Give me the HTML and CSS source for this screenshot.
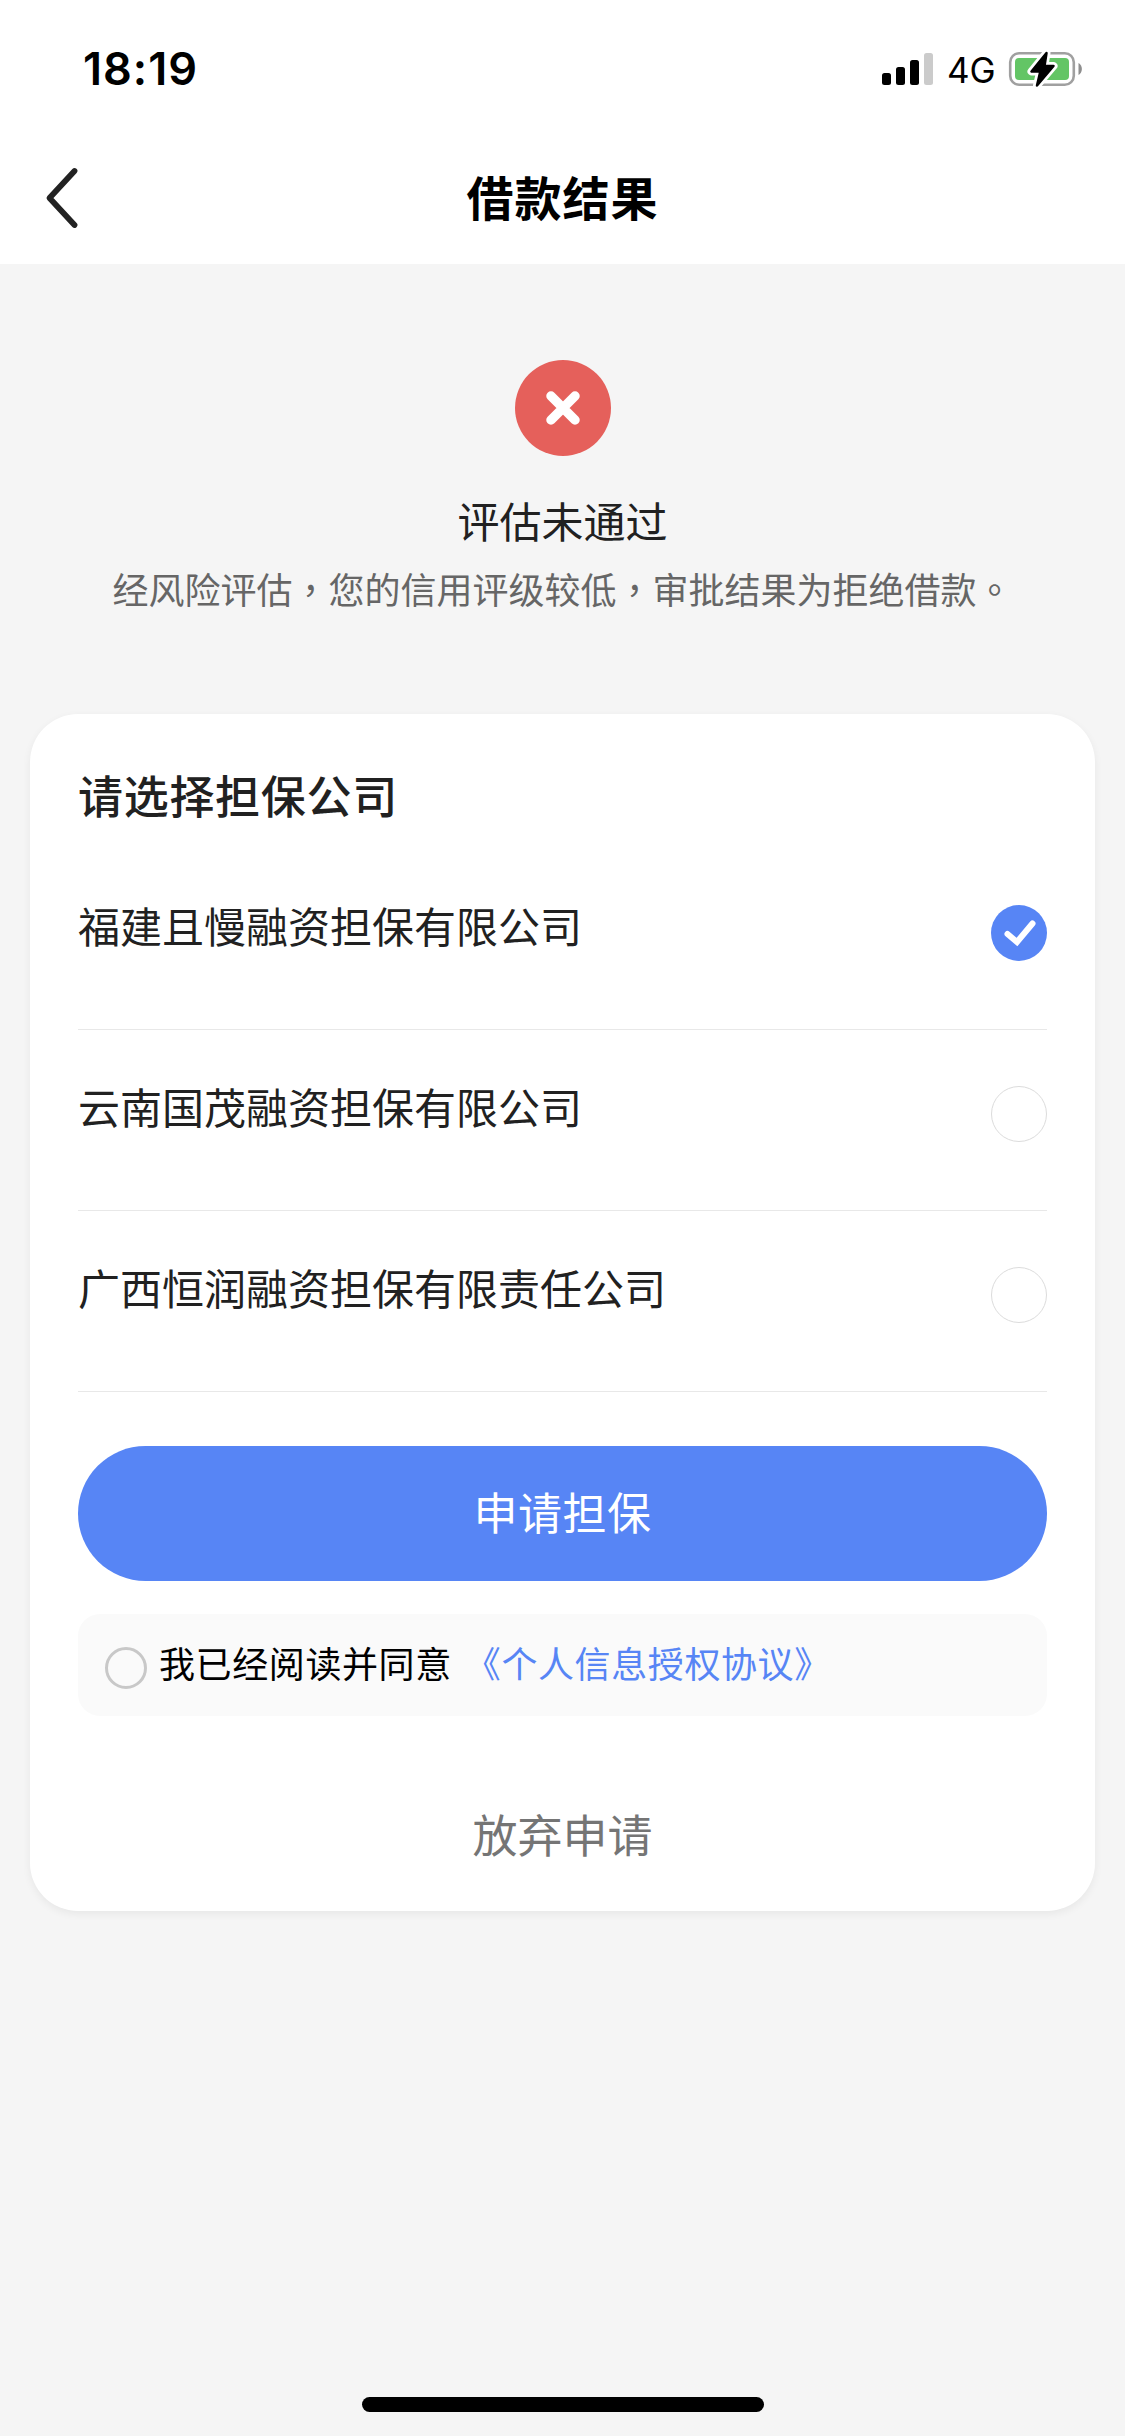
FILE: index.html
```html
<!DOCTYPE html>
<html lang="zh-CN">
<head>
    <meta charset="UTF-8">
    <meta name="viewport" content="width=device-width, initial-scale=1.0">
    <title>借款结果</title>
    <link rel="stylesheet" href="styles.css">
</head>
<body>
    <header class="header">
        <div class="status-bar">
            <span class="time">18:19</span>
            <div class="status-icons">
                <svg class="signal" viewBox="0 0 37 32">
                    <rect x="0" y="20" width="9" height="12" rx="2.5"/>
                    <rect x="14" y="14" width="9" height="18" rx="2.5"/>
                    <rect x="28" y="7" width="9" height="25" rx="2.5"/>
                    <rect class="signal-off" x="42" y="0" width="9" height="32" rx="2.5"/>
                </svg>
                <span class="network">4G</span>
                <svg class="battery" viewBox="0 0 74 36">
                    <rect x="1.2" y="2.2" width="63.6" height="31.6" rx="9" fill="none" stroke="#a0a0a0" stroke-width="2.6"/>
                    <rect x="6" y="7" width="54" height="22" rx="4" fill="#63c565"/>
                    <path d="M69.5 12a7 7 0 0 1 0 12z" fill="#8e8e8e"/>
                    <path class="bolt-gap" d="M37.500 2 22.500 20.500h8.800L28 34.500 44.500 15h-9z"/>
                    <path class="bolt" d="M37.500 2 22.500 20.500h8.800L28 34.500 44.500 15h-9z"/>
                </svg>
            </div>
        </div>
        <div class="nav-bar">
            <a class="back" href="#" aria-label="返回">
                <svg viewBox="0 0 32 62"><path d="M28.500 4 3.500 31l25 27"/></svg>
            </a>
            <h1>借款结果</h1>
        </div>
    </header>

    <section class="result">
        <svg class="result-icon" viewBox="0 0 96 96">
            <circle cx="48" cy="48" r="48"/>
            <path d="M36 36l24 24M60 36L36 60"/>
        </svg>
        <h2>评估未通过</h2>
        <p>经风险评估<span lang="zh-TW" class="punct">，</span>您的信用评级较低<span lang="zh-TW" class="punct">，</span>审批结果为拒绝借款<span lang="zh-TW" class="punct">。</span></p>
    </section>

    <main class="card">
        <h3>请选择担保公司</h3>
        <ul class="company-list">
            <li>
                <span>福建且慢融资担保有限公司</span>
                <svg class="radio checked" viewBox="0 0 56 56">
                    <circle cx="28" cy="28" r="28"/>
                    <path d="M16.500 29l9.500 8L41.500 18.500"/>
                </svg>
            </li>
            <li>
                <span>云南国茂融资担保有限公司</span>
                <i class="radio"></i>
            </li>
            <li>
                <span>广西恒润融资担保有限责任公司</span>
                <i class="radio"></i>
            </li>
        </ul>
        <button class="btn">申请担保</button>
        <div class="agreement">
            <i class="agree-check"></i>
            <span class="agree-text">我已经阅读并同意</span>
            <a href="#">《个人信息授权协议》</a>
        </div>
        <button class="btn-text">放弃申请</button>
    </main>

    <div class="home-indicator"></div>
</body>
</html>
```

FILE: styles.css
```css
* {
    margin: 0;
    padding: 0;
    box-sizing: border-box;
}

body {
    font-family: 'Noto Sans CJK SC', sans-serif;
    color: #212121;
    background-color: #f5f5f5;
    display: flex;
    flex-direction: column;
    height: 2436px;
}

h1, h2, h3 {
    font-weight: 500;
}

button {
    font-family: inherit;
    border: none;
    cursor: pointer;
}

svg {
    display: block;
    overflow: visible;
}

/* Header */
.header {
    height: 264px;
    background-color: #fff;
}

.status-bar {
    height: 132px;
    padding: 42px 42px 0 83px;
    display: flex;
    justify-content: space-between;
    align-items: flex-start;
    font-family: Inter, sans-serif;
    color: #000;
}

.time {
    font-size: 45px;
    font-weight: 600;
    line-height: 54px;
    letter-spacing: 1px;
}

.status-icons {
    display: flex;
    align-items: flex-start;
    padding-top: 9px;
}

.signal {
    width: 37px;
    height: 32px;
    margin: 2px 28px 0 0;
}

.signal-off {
    fill: #cbcbcb;
}

.network {
    font-size: 35px;
    line-height: 38px;
    width: 62px;
}

.battery {
    width: 74px;
    height: 36px;
}

.bolt-gap {
    fill: #fff;
    stroke: #fff;
    stroke-width: 8;
    stroke-linejoin: round;
}

.bolt {
    fill: #000;
    stroke: #000;
    stroke-width: 2.5;
    stroke-linejoin: round;
}

.nav-bar {
    height: 132px;
    padding: 0 46px;
    display: grid;
    grid-template-columns: 32px 1fr 32px;
    align-items: center;
}

.back svg {
    width: 32px;
    height: 62px;
    fill: none;
    stroke: #222;
    stroke-width: 5.8;
    stroke-linecap: round;
    stroke-linejoin: round;
}

h1 {
    padding-bottom: 5px;
    font-size: 47px;
    line-height: 127px;
    letter-spacing: 1px;
    font-weight: 700;
    text-align: center;
    color: #000;
}

/* Result */
.result {
    height: 450px;
    padding-top: 96px;
    display: flex;
    flex-direction: column;
    align-items: center;
}

.result-icon {
    width: 96px;
    height: 96px;
    fill: #e5605b;
}

.result-icon path {
    stroke: #fff;
    stroke-width: 9.5;
    stroke-linecap: round;
}

.result h2 {
    margin-top: 34px;
    font-size: 42px;
    line-height: 60px;
    font-weight: 400;
}

.result p {
    margin-top: 13px;
    font-size: 36px;
    line-height: 50px;
    color: #666;
}

.punct {
    font-family: 'Noto Sans CJK TC', sans-serif;
}

/* Guarantee card */
.card {
    height: 1197px;
    margin: 0 30px;
    padding: 47px 48px 0;
    display: flex;
    flex-direction: column;
    background-color: #fff;
    border-radius: 48px;
    box-shadow: 0 3px 9px rgba(0, 0, 0, 0.06);
}

.card h3 {
    font-size: 45px;
    line-height: 68px;
    letter-spacing: 0.7px;
}

.company-list {
    list-style: none;
    margin-top: 20px;
}

.company-list li {
    height: 181px;
    padding-top: 46px;
    display: flex;
    justify-content: space-between;
    align-items: flex-start;
    border-bottom: 1px solid #e8e8e8;
    font-size: 42px;
    line-height: 60px;
}

.radio {
    width: 56px;
    height: 56px;
    margin-top: 10px;
    border: 1px solid #dcdcdc;
    border-radius: 50%;
}

.radio.checked {
    border: none;
    fill: #5785f5;
}

.radio.checked path {
    fill: none;
    stroke: #fff;
    stroke-width: 6;
    stroke-linecap: round;
}

.btn {
    height: 135px;
    margin-top: 54px;
    padding-bottom: 6px;
    border-radius: 68px;
    background-color: #5785f5;
    color: #fff;
    font-size: 44px;
    letter-spacing: 0.5px;
}

.agreement {
    height: 102px;
    margin-top: 33px;
    padding: 0 27px;
    display: flex;
    align-items: center;
    border-radius: 22px;
    background-color: #fafafa;
    color: #000;
    font-size: 36px;
    line-height: 96px;
    letter-spacing: 0.6px;
}

.agree-check {
    width: 42px;
    height: 42px;
    margin-top: 6px;
    border: 3px solid #c8c8c8;
    border-radius: 50%;
}

.agree-text,
.agreement a {
    padding-bottom: 6px;
}

.agree-text {
    margin-left: 12px;
}

.agreement a {
    margin-left: 13px;
    color: #5785f5;
    text-decoration: none;
}

.btn-text {
    margin-top: 85px;
    background: none;
    color: #757575;
    font-size: 45px;
    line-height: 66px;
}

.home-indicator {
    width: 402px;
    height: 15px;
    margin: auto auto 24px;
    border-radius: 8px;
    background-color: #000;
}
```
